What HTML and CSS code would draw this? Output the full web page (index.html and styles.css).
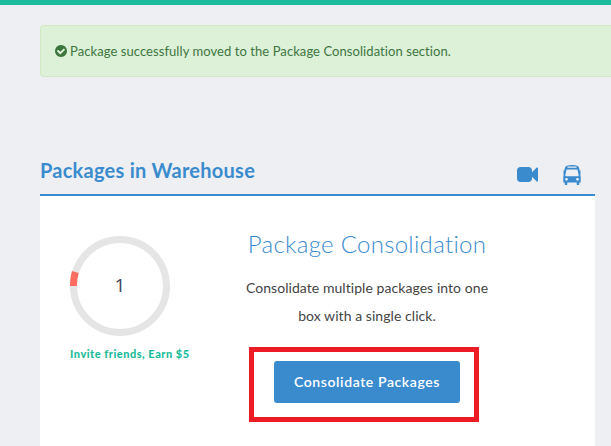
FILE: index.html
```
<!DOCTYPE html>
<html lang="en">
<head>
<meta charset="utf-8">
<title>Packages in Warehouse</title>
<link rel="stylesheet" href="styles.css">
</head>
<body>
<div class="alert">
  <svg class="check" viewBox="128 128 1536 1536"><path d="M1412 734q0-28-18-46l-91-90q-19-19-45-19t-45 19l-408 407-226-226q-19-19-45-19t-45 19l-91 90q-18 18-18 46 0 27 18 45l362 362q19 19 45 19 27 0 46-19l543-543q18-18 18-45zm252 162q0 209-103 385.5t-279.5 279.5-385.5 103-385.5-103-279.5-279.5-103-385.5 103-385.5 279.5-279.5 385.5-103 385.5 103 279.5 279.5 103 385.5z"/></svg>
  <span class="alert-text">Package successfully moved to the Package Consolidation section.</span>
</div>
<main class="panel">
  <header class="panel-head">
    <h2 class="title">Packages in Warehouse</h2>
    <svg class="video" viewBox="0 256 1792 1280"><path d="M1792 352v1088q0 42-39 59-13 5-25 5-27 0-45-19l-403-403v166q0 119-84.5 203.5t-203.5 84.5h-704q-119 0-203.5-84.5t-84.5-203.5v-704q0-119 84.5-203.5t203.5-84.5h704q119 0 203.5 84.5t84.5 203.5v165l403-402q18-19 45-19 12 0 25 5 39 17 39 59z"/></svg>
    <svg class="bus" viewBox="0 0 18 20"><path fill-rule="evenodd" d="M9 0C13.500 0 15.600 1 15.900 2.600L16.700 5.600H17.500V9.500H17.300L17.700 12V17.500H16.300V19a1.300 1.300 0 0 1-2.600 0V17.500H4.300V19a1.300 1.300 0 0 1-2.600 0V17.500H.3V12L.7 9.500H.5V5.600H1.300L2.100 2.600C2.400 1 4.500 0 9 0zM4.500 1.600v1.200h9V1.600zM4 4.500q-.5 0-.6.500L2.300 10.600q-.1.600.6.600h12.200q.7 0 .6-.6L14.600 5q-.1-.5-.6-.500zM3.500 12.900a1.400 1.400 0 1 0 0 2.800a1.400 1.400 0 1 0 0-2.800zM14.500 12.900a1.400 1.400 0 1 0 0 2.800a1.400 1.400 0 1 0 0-2.800z"/></svg>
  </header>
  <div class="panel-body">
    <section class="counter">
      <div class="dial">
        <svg class="ring" viewBox="0 0 100 100"><circle class="track" cx="50" cy="50" r="46.500"/><path class="progress" d="M3.500 50A46.500 46.500 0 0 1 5.300 36"/></svg>
        <span class="count">1</span>
      </div>
      <a class="invite">Invite friends, Earn $5</a>
    </section>
    <section class="consolidation">
      <h3 class="heading">Package Consolidation</h3>
      <p class="copy">Consolidate multiple packages into one<br>box with a single click.</p>
      <div class="highlight"><button class="button">Consolidate Packages</button></div>
    </section>
  </div>
</main>
</body>
</html>
```
FILE: styles.css
```
* { box-sizing: border-box; }
body {
  margin: 0;
  height: 446px;
  overflow: hidden;
  border-top: 5px solid #1abc9c;
  background: #edeff3;
  font-family: Lato, "Open Sans", sans-serif;
  font-variant-ligatures: none;
  white-space: nowrap;
}
h2, h3, p { margin: 0; }
svg { display: block; flex: none; }
.alert {
  display: flex;
  align-items: center;
  height: 52px;
  margin: 20px 0 0 40px;
  padding: 0 0 1px 14px;
  border: 1px solid #d3e9c3;
  border-right: 0;
  border-radius: 4px 0 0 4px;
  background: #ddf0d8;
  color: #3c763d;
  font-size: 13px;
}
.check { width: 12px; height: 12px; margin-right: 3px; fill: #3c763d; }
.alert-text { letter-spacing: 0.07px; }
.panel { width: 555px; margin: 74px 0 0 40px; }
.panel-head {
  display: flex;
  height: 45px;
  border-bottom: 2px solid #3a8bce;
  color: #3a8bce;
  fill: #3a8bce;
}
.title { flex: 1; font-size: 20px; line-height: 38px; font-weight: 700; letter-spacing: 0.25px; }
.video { width: 21px; height: 15px; margin: 16px 25px 0 0; }
.bus { width: 18px; height: 20px; margin: 14px 14px 0 0; }
.panel-body { display: flex; height: 250px; background: #fff; }
.counter { width: 120px; margin: 40px 0 0 30px; }
.dial { display: grid; width: 100px; height: 100px; place-items: center; }
.ring, .count { grid-area: 1 / 1; }
.ring { width: 100px; height: 100px; }
.track, .progress { fill: none; stroke: #e5e5e5; stroke-width: 7; }
.progress { stroke: #ff6c60; }
.count { color: #42425c; font: 19px/24px "Open Sans", sans-serif; margin-top: -2px; }
.invite {
  display: block;
  margin-top: 9px;
  color: #1abc9c;
  font-size: 11px;
  font-weight: 900;
  line-height: 18px;
  letter-spacing: 0.51px;
}
.consolidation { width: 254px; margin: 33px 0 0 50px; text-align: center; }
.heading { color: #3a8bce; font-size: 24px; font-weight: 300; line-height: 30px; letter-spacing: 0.3px; }
.copy { margin-top: 15px; color: #444; font-size: 14px; line-height: 28px; letter-spacing: 0.06px; }
.highlight {
  display: flex;
  width: 230px;
  height: 75px;
  margin: 17px 0 0 9px;
  border: 5px solid #ed1c24;
  align-items: center;
  justify-content: center;
}
.button {
  width: 186px;
  height: 42px;
  margin: 0 0 5px 6px;
  padding: 0 0 2px;
  border: 0;
  border-radius: 3px;
  background: #3a8bce;
  color: #fff;
  font: 600 14px Lato, sans-serif;
  letter-spacing: 0.6px;
}
```
